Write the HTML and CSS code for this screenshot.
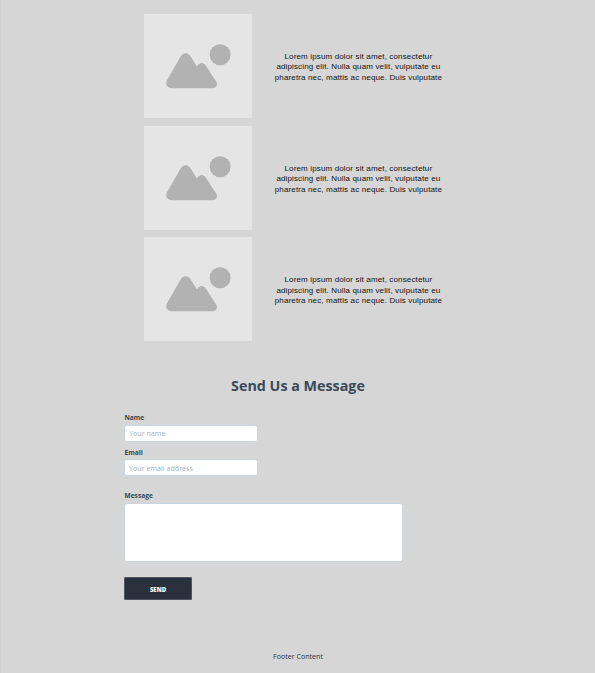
FILE: index.html
```
<!DOCTYPE html>
<html lang="en">
<head>
<meta charset="utf-8">
<title>Send Us a Message</title>
<link rel="stylesheet" href="styles.css">
</head>
<body>
<svg class="defs" width="0" height="0" aria-hidden="true">
  <symbol id="placeholder" viewBox="0 0 108.5 104">
    <path d="M22.9 66.5 L36.2 43.2 C39 38 44.4 38 47.2 43.2 L53 52.6 C55.5 48 59.5 48 62 51.8 L72.2 67.5 C74.3 71 72 74.2 68.5 74.2 H28.5 C23 74.2 21 70.5 22.9 66.5 Z"/>
    <circle cx="76.2" cy="40.7" r="10.5"/>
  </symbol>
</svg>
<main class="page">
  <section class="items">
    <article class="item">
      <svg class="thumb"><use href="#placeholder"/></svg>
      <p class="blurb">Lorem ipsum dolor sit amet, consectetur<br>adipiscing elit. Nulla quam velit, vulputate eu<br>pharetra nec, mattis ac neque. Duis vulputate</p>
    </article>
    <article class="item">
      <svg class="thumb"><use href="#placeholder"/></svg>
      <p class="blurb">Lorem ipsum dolor sit amet, consectetur<br>adipiscing elit. Nulla quam velit, vulputate eu<br>pharetra nec, mattis ac neque. Duis vulputate</p>
    </article>
    <article class="item">
      <svg class="thumb"><use href="#placeholder"/></svg>
      <p class="blurb">Lorem ipsum dolor sit amet, consectetur<br>adipiscing elit. Nulla quam velit, vulputate eu<br>pharetra nec, mattis ac neque. Duis vulputate</p>
    </article>
  </section>
  <h2 class="title">Send Us a Message</h2>
  <form class="form">
    <label class="label" for="name">Name</label>
    <input class="field" id="name" type="text" placeholder="Your name">
    <label class="label" for="email">Email</label>
    <input class="field field-email" id="email" type="email" placeholder="Your email address">
    <label class="label" for="message">Message</label>
    <textarea class="field area" id="message"></textarea>
    <button class="send" type="button">SEND</button>
  </form>
  <footer class="footer">Footer Content</footer>
</main>
</body>
</html>
```
FILE: styles.css
```
* { box-sizing: border-box; }
body {
  margin: 0;
  background: #d6d6d6;
  font-family: "Open Sans", sans-serif;
}
.defs { display: block; }
.page {
  height: 673px;
  padding-top: 14px;
  border-left: 1px solid #cfcfcf;
  overflow: hidden;
}
.items {
  display: flex;
  flex-direction: column;
  gap: 7.7px;
  margin-left: 143px;
}
.item {
  display: flex;
  align-items: center;
  height: 104px;
}
.thumb {
  flex: none;
  width: 108.4px;
  height: 104px;
  background: #e5e5e5;
  fill: #b2b2b2;
}
.blurb {
  width: 212px;
  margin: 3.4px 0 0;
  font: 8px/10.5px "Liberation Sans", Arial, sans-serif;
  letter-spacing: 0.14px;
  text-align: center;
  white-space: nowrap;
  color: #111;
}
.title {
  margin: 34.4px 0 0;
  font-size: 14.3px;
  line-height: 20px;
  text-align: center;
  color: #3a4a58;
}
.form {
  display: flex;
  flex-direction: column;
  align-items: flex-start;
  margin: 17px 0 0 123px;
}
.label {
  height: 12px;
  padding-left: 0.5px;
  font-size: 6.6px;
  font-weight: 700;
  line-height: 10px;
  color: #3a4650;
}
.field {
  display: block;
  width: 134px;
  height: 17px;
  margin: 0 0 6px;
  padding: 0 4px;
  border: 1px solid #c8d6e4;
  border-radius: 2.5px;
  background: #fff;
  font: 7.15px "Open Sans", sans-serif;
  outline: none;
}
.field::placeholder { color: #a3b1be; opacity: 1; }
.field-email { margin: -0.6px 0 14.8px; }
.area {
  width: 279px;
  height: 59px;
  margin-bottom: 15.4px;
  resize: none;
}
.send {
  width: 68px;
  height: 23px;
  padding: 2px 0 0;
  border: 1px solid #4b5863;
  border-radius: 1px;
  background: #29323c;
  color: #fff;
  font: 800 6px "Open Sans", sans-serif;
}
.footer {
  margin-top: 50.8px;
  font-size: 7.1px;
  line-height: 10px;
  text-align: center;
  color: #26323d;
}
```
